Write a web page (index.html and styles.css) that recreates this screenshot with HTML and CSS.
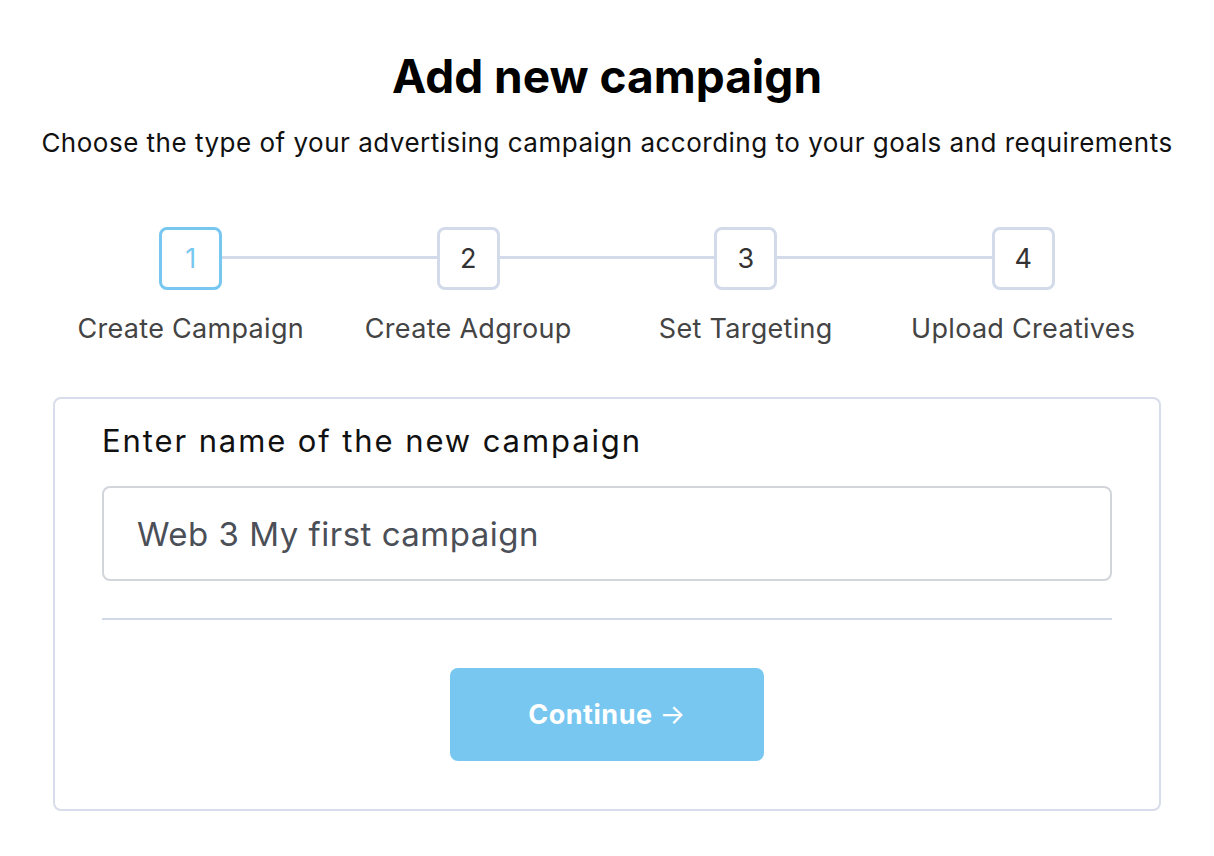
FILE: index.html
```html
<!DOCTYPE html>
<html lang="en">
<head>
  <meta charset="UTF-8">
  <meta name="viewport" content="width=device-width, initial-scale=1.0">
  <title>Add new campaign</title>
  <link rel="stylesheet" href="styles.css">
</head>
<body>
  <div class="page">
    <h1 class="title">Add new campaign</h1>
    <p class="subtitle">Choose the type of your advertising campaign according to your goals and requirements</p>

    <ol class="steps">
      <li class="step active">
        <div class="step-num">1</div>
        <div class="step-label">Create Campaign</div>
      </li>
      <li class="step">
        <div class="step-num">2</div>
        <div class="step-label">Create Adgroup</div>
      </li>
      <li class="step">
        <div class="step-num">3</div>
        <div class="step-label">Set Targeting</div>
      </li>
      <li class="step">
        <div class="step-num">4</div>
        <div class="step-label">Upload Creatives</div>
      </li>
    </ol>

    <form class="card">
      <label class="field-label" for="campaign-name">Enter name of the new campaign</label>
      <input class="field-input" id="campaign-name" type="text" value="Web 3 My first campaign">
      <hr class="divider">
      <div class="actions">
        <button class="btn-continue" type="submit">Continue <span class="arrow">→</span></button>
      </div>
    </form>
  </div>
</body>
</html>
```

FILE: styles.css
```css
body {
  margin: 0;
  font-family: Inter, "Noto Sans", sans-serif;
  background: #fff;
  color: #111;
}

.page {
  width: 1110px;
  margin: 0 auto;
  padding-top: 48px;
  display: flex;
  flex-direction: column;
  align-items: center;
}

.title {
  margin: 0;
  font-size: 46px;
  line-height: 56px;
  font-weight: 700;
  color: #000;
}

.subtitle {
  margin: 22px 0 0;
  font-size: 26px;
  line-height: 34px;
  color: #111;
  white-space: nowrap;
  letter-spacing: 0.5px;
}

.steps {
  list-style: none;
  margin: 67px 0 0;
  padding: 0;
  width: 100%;
  display: grid;
  grid-template-columns: repeat(4, 1fr);
}

.step {
  position: relative;
  display: flex;
  flex-direction: column;
  align-items: center;
}

.step:not(:last-child)::after {
  content: "";
  position: absolute;
  top: 29px;
  left: calc(50% + 31px);
  width: calc(100% - 62px);
  height: 3px;
  background: #d3daea;
}

.step-num {
  box-sizing: border-box;
  width: 63px;
  height: 63px;
  border: 3px solid #d3daea;
  border-radius: 8px;
  display: flex;
  align-items: center;
  justify-content: center;
  font-size: 27px;
  color: #333;
}

.step.active .step-num {
  border-color: #77c7f0;
  color: #77c7f0;
}

.step-label {
  margin-top: 22px;
  font-size: 27px;
  line-height: 34px;
  color: #444;
  letter-spacing: 0.3px;
  white-space: nowrap;
}

.card {
  box-sizing: border-box;
  width: 1108px;
  margin-top: 51px;
  padding: 22px 47px 48px;
  border: 2px solid #d7ddea;
  border-radius: 8px;
  display: flex;
  flex-direction: column;
}

.field-label {
  font-size: 31px;
  line-height: 40px;
  color: #111;
  letter-spacing: 1.9px;
}

.field-input {
  box-sizing: border-box;
  margin-top: 25px;
  height: 95px;
  padding: 0 33px;
  border: 2px solid #d2d5da;
  border-radius: 8px;
  font-family: inherit;
  font-size: 33px;
  color: #4b4f57;
  letter-spacing: 0.5px;
  outline: none;
}

.divider {
  margin: 37px 0 0;
  border: none;
  border-top: 2px solid #d0d9ea;
}

.actions {
  display: flex;
  justify-content: center;
  margin-top: 48px;
}

.btn-continue {
  width: 314px;
  height: 93px;
  border: none;
  border-radius: 8px;
  background: #77c7f0;
  color: #fff;
  font-family: inherit;
  font-size: 27px;
  font-weight: 700;
  letter-spacing: 0.5px;
  cursor: pointer;
}

.btn-continue .arrow {
  font-weight: 400;
}
```
